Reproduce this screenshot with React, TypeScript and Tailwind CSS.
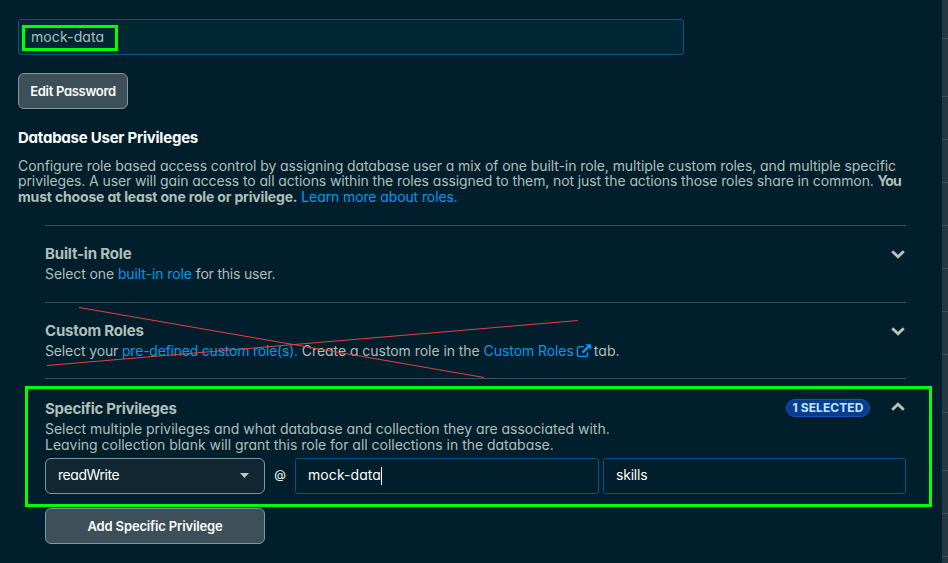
import type { ReactNode } from "react";

function Chevron({ up = false }: { up?: boolean }) {
  return (
    <svg width="16" height="16" viewBox="0 0 16 16" className="block shrink-0" fill="none" stroke="#b5c4bf" strokeWidth="2.9" strokeLinecap="butt" strokeLinejoin="miter">
      <path d={up ? "M2.2 10.8 L8 5.3 L13.8 10.8" : "M2.2 5.2 L8 10.7 L13.8 5.2"} />
    </svg>
  );
}

function ExternalIcon() {
  return (
    <svg width="16" height="14" viewBox="0 0 16 14" className="ml-[2px] mr-[2px] inline-block align-[-2px]" fill="none" stroke="#0498ec" strokeWidth="1.4">
      <path d="M8 2.6 H3.2 Q1.4 2.6 1.4 4.4 V10.6 Q1.4 12.4 3.2 12.4 H9.8 Q11.6 12.4 11.6 10.6 V8.4" />
      <path d="M6.4 8.6 L13 2.2" strokeWidth="2.4" />
      <path d="M9.4 0.2 H15.2 V6 Z" fill="#0498ec" stroke="none" />
    </svg>
  );
}

function Link({ children, className = "" }: { children: ReactNode; className?: string }) {
  return <a className={`text-[#0498ec] ${className}`}>{children}</a>;
}

const railHeights = [
  "h-[38px]", "h-[58px]", "h-[43px]", "h-[43px]", "h-[43px]", "h-[43px]",
  "h-[43px]", "h-[43px]", "h-[58px]", "h-[58px]", "h-[43px]", "h-[43px]",
];

export default function App() {
  return (
    <div className="relative flex h-[563px] w-[948px] overflow-hidden bg-[#001e2b] font-['Inter','Liberation_Sans',sans-serif] text-[14px] text-[#b0bfba] [font-feature-settings:'cv11']">
      <main className="flex w-[942px] shrink-0 flex-col pl-[18px] pt-[19px]">
        <div className="flex h-9 w-[666px] items-center rounded-[3px] border border-[#00567d] bg-[#012636] pb-0.5 pl-3">
          <span className="tracking-[0.1px]">mock-data</span>
        </div>
        <button className="mt-[18px] h-9 w-[110px] rounded-md border border-[#87949b] bg-[#3d4f58] pt-0.5 text-[13px] font-semibold tracking-[-0.3px] text-white">
          Edit Password
        </button>
        <h2 className="mt-[19px] h-5 text-[15px] font-bold leading-5 tracking-[-0.24px] text-white">Database User Privileges</h2>
        <p className="mt-[9.8px] h-[47px] whitespace-nowrap leading-[15.5px]">
          <span className="block tracking-[-0.08px]">
            Configure role based access control by assigning database user a mix of one built-in role, multiple custom roles, and multiple specific
          </span>
          <span className="block tracking-[-0.107px]">
            privileges. A user will gain access to all actions within the roles assigned to them, not just the actions those roles share in common.{" "}
            <b className="tracking-[-0.9px]">You</b>
          </span>
          <span className="block">
            <b className="tracking-[-0.165px]">must choose at least one role or privilege.</b>{" "}
            <Link className="tracking-[-0.11px]">Learn more about roles.</Link>
          </span>
        </p>

        <div className="ml-[27px] flex w-[861px] flex-col whitespace-nowrap">
          <section className="mt-[20.2px] flex h-[77px] justify-between border-t border-[#3d4f58] pt-[18px]">
            <div>
              <h3 className="h-5 text-[15px] font-bold leading-5 tracking-[-0.17px]">Built-in Role</h3>
              <p className="leading-5">
                <span className="tracking-[-0.1px]">Select one </span><Link className="tracking-[-0.09px]">built-in role</Link> <span className="tracking-[-0.2px]">for this user.</span>
              </p>
            </div>
            <div className="pt-[2px]"><Chevron /></div>
          </section>
          <section className="flex h-[76px] justify-between border-t border-[#3d4f58] pt-[18px]">
            <div>
              <h3 className="h-5 text-[15px] font-bold leading-5 tracking-[-0.18px]">Custom Roles</h3>
              <p className="leading-5">
                <span className="tracking-[-0.14px]">Select your </span>
                <Link className="tracking-[-0.22px]">pre-defined custom role(s).</Link>
                <span className="tracking-[-0.05px]"> Create a custom role in the </span>
                <Link className="tracking-[-0.08px]">Custom Roles<ExternalIcon /></Link>
                <span className="tracking-[0.1px]">tab.</span>
              </p>
            </div>
            <div className="pt-[2px]"><Chevron /></div>
          </section>
          <section className="flex h-[80px] justify-between border-t border-[#3d4f58] pt-[20px]">
            <div>
              <h3 className="h-5 text-[15px] font-bold leading-5 tracking-[-0.26px]">Specific Privileges</h3>
              <p className="mt-[2px] leading-4">
                <span className="block tracking-[-0.025px]">Select multiple privileges and what database and collection they are associated with.</span>
                <span className="block tracking-[-0.022px]">Leaving collection blank will grant this role for all collections in the database.</span>
              </p>
            </div>
            <div className="flex items-start gap-5">
              <span className="flex h-[18px] w-[84px] items-center justify-center rounded-full border border-[#1254b7] bg-[#083c90] pt-px text-[12px] font-bold tracking-[0.09px] text-[#c3e7fe]">
                1 SELECTED
              </span>
              <Chevron up />
            </div>
          </section>
          <div className="flex h-9 items-center text-white">
            <div className="flex h-9 w-[220px] items-center justify-between rounded-md border border-[#87949b] bg-[#112733] pl-3 pr-[15px]">
              <span className="pb-0.5 tracking-[-0.45px]">readWrite</span>
              <svg width="9" height="5" viewBox="0 0 9 5" fill="#c1c7c6"><path d="M0 0 H9 L4.5 5 Z" /></svg>
            </div>
            <span className="w-[30px] pb-0.5 text-center text-[12px]">@</span>
            <div className="flex h-9 w-[304px] items-center rounded-[3px] border border-[#00567d] pl-3">
              <span className="pb-0.5 tracking-[0.08px]">mock-data</span>
              <span className="h-[18px] w-px bg-white" />
            </div>
            <div className="ml-1 flex h-9 w-[303px] items-center rounded-[3px] border border-[#00567d] pb-0.5 pl-3">
              <span className="tracking-[-0.2px]">skills</span>
            </div>
          </div>
          <button className="mt-[14px] h-9 w-[220px] rounded-md border border-[#87949b] bg-[#3d4f58] pt-0.5 text-[13px] font-semibold tracking-[-0.15px] text-white">
            Add Specific Privilege
          </button>
        </div>
      </main>

      <aside className="flex w-[6px] shrink-0 flex-col bg-[#233842]">
        {railHeights.map((h, i) => (
          <div key={i} className={`shrink-0 ${h} box-content border-b border-[#3d4f58] [margin-bottom:-1px]`} />
        ))}
      </aside>

      <div className="absolute left-[22px] top-[25px] h-[26px] w-[96px] border-[3px] border-[#00ff00]" />
      <div className="absolute left-[25px] top-[386px] h-[121px] w-[907px] border-[3px] border-[#00ff00]" />
      <svg className="absolute left-0 top-0" width="948" height="563" fill="none" stroke="#e8433c" strokeWidth="1">
        <path d="M79 307.5 L484 377.5" />
        <path d="M47 365.5 L578 320.5" />
      </svg>
    </div>
  );
}
